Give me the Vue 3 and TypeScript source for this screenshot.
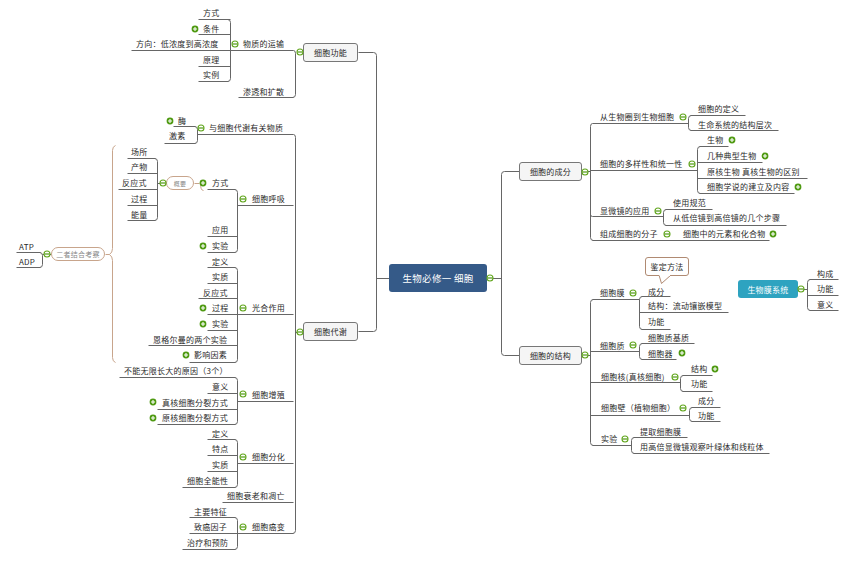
<script setup lang="ts">
interface Topic { t: string; x: number; y: number }
type Seg = [number, number, number]

const topics: Topic[] = [
  { t: '方式', x: 203, y: 13 }, { t: '条件', x: 203, y: 29 }, { t: '方向\uFF1A低浓度到高浓度', x: 136, y: 44 },
  { t: '原理', x: 203, y: 60 }, { t: '实例', x: 203, y: 75 }, { t: '物质的运输', x: 243, y: 44 },
  { t: '渗透和扩散', x: 243, y: 92 }, { t: '酶', x: 178, y: 121 }, { t: '激素', x: 169, y: 136 },
  { t: '与细胞代谢有关物质', x: 209, y: 128 }, { t: '场所', x: 131, y: 152 }, { t: '产物', x: 131, y: 167 },
  { t: '反应式', x: 122, y: 183 }, { t: '过程', x: 131, y: 199 }, { t: '能量', x: 131, y: 215 },
  { t: '方式', x: 212, y: 183 }, { t: '细胞呼吸', x: 252, y: 199 }, { t: '应用', x: 212, y: 230 },
  { t: '实验', x: 212, y: 246 }, { t: '定义', x: 212, y: 262 }, { t: '实质', x: 212, y: 277 },
  { t: '反应式', x: 203, y: 293 }, { t: '过程', x: 212, y: 308 }, { t: '实验', x: 212, y: 324 },
  { t: '恩格尔曼的两个实验', x: 153, y: 340 }, { t: '影响因素', x: 194, y: 355 }, { t: '光合作用', x: 252, y: 308 },
  { t: 'ATP', x: 19, y: 247 }, { t: 'ADP', x: 19, y: 262 },
  { t: '不能无限长大的原因\uFF083个\uFF09', x: 124, y: 371 }, { t: '意义', x: 212, y: 387 },
  { t: '真核细胞分裂方式', x: 162, y: 403 }, { t: '原核细胞分裂方式', x: 162, y: 418 }, { t: '细胞增殖', x: 252, y: 395 },
  { t: '定义', x: 212, y: 434 }, { t: '特点', x: 212, y: 449 }, { t: '实质', x: 212, y: 465 },
  { t: '细胞全能性', x: 187, y: 481 }, { t: '细胞分化', x: 252, y: 457 }, { t: '细胞衰老和凋亡', x: 227, y: 496 },
  { t: '主要特征', x: 194, y: 512 }, { t: '致癌因子', x: 194, y: 527 }, { t: '治疗和预防', x: 187, y: 543 },
  { t: '细胞癌变', x: 252, y: 527 },
  { t: '从生物圈到生物细胞', x: 600, y: 117 }, { t: '细胞的定义', x: 698, y: 109 }, { t: '生命系统的结构层次', x: 698, y: 125 },
  { t: '细胞的多样性和统一性', x: 600, y: 164 }, { t: '生物', x: 707, y: 140 }, { t: '几种典型生物', x: 707, y: 156 },
  { t: '原核生物 真核生物的区别', x: 707, y: 172 }, { t: '细胞学说的建立及内容', x: 707, y: 187 },
  { t: '显微镜的应用', x: 600, y: 211 }, { t: '使用规范', x: 673, y: 203 }, { t: '从低倍镜到高倍镜的几个步骤', x: 673, y: 218 },
  { t: '组成细胞的分子', x: 600, y: 234 }, { t: '细胞中的元素和化合物', x: 683, y: 234 },
  { t: '细胞膜', x: 600, y: 293 }, { t: '成分', x: 648, y: 292 }, { t: '结构\uFF1A流动镶嵌模型', x: 648, y: 306 }, { t: '功能', x: 648, y: 322 },
  { t: '细胞质', x: 600, y: 346 }, { t: '细胞质基质', x: 648, y: 338 }, { t: '细胞器', x: 648, y: 354 },
  { t: '细胞核(真核细胞)', x: 601, y: 377 }, { t: '结构', x: 691, y: 369 }, { t: '功能', x: 691, y: 384 },
  { t: '细胞壁\uFF08植物细胞\uFF09', x: 601, y: 408 }, { t: '成分', x: 698, y: 401 }, { t: '功能', x: 698, y: 416 },
  { t: '实验', x: 601, y: 439 }, { t: '提取细胞膜', x: 640, y: 432 }, { t: '用高倍显微镜观察叶绿体和线粒体', x: 640, y: 447 },
  { t: '构成', x: 817, y: 274 }, { t: '功能', x: 817, y: 289 }, { t: '意义', x: 817, y: 305 },
]

const boxes = [
  { t: '细胞功能', x: 303, y: 43, w: 55, h: 19, k: 'main' },
  { t: '细胞代谢', x: 303, y: 322, w: 55, h: 19, k: 'main' },
  { t: '细胞的成分', x: 519, y: 162, w: 63, h: 19, k: 'main' },
  { t: '细胞的结构', x: 519, y: 346, w: 63, h: 19, k: 'main' },
  { t: '生物必修一 细胞', x: 389, y: 264, w: 98, h: 28, k: 'root' },
  { t: '生物膜系统', x: 738, y: 280, w: 60, h: 18, k: 'float' },
  { t: '二者结合考察', x: 51, y: 247, w: 54, h: 14, k: 'pill' },
  { t: '概要', x: 166, y: 176, w: 28, h: 14, k: 'pill small' },
  { t: '鉴定方法', x: 645, y: 257, w: 44, h: 19, k: 'note' },
]

// [x1, x2, y]
const unders: Seg[] = [
  [198, 230, 19], [198, 230, 34], [131, 293, 50], [198, 230, 66], [198, 228, 81], [238, 293, 97],
  [173, 195, 126], [164, 195, 143], [197, 293, 134], [127, 155, 158], [127, 157, 173], [118, 157, 189],
  [127, 157, 205], [127, 155, 220], [207, 235, 189], [237, 293, 205], [207, 237, 236], [207, 235, 252],
  [207, 235, 267], [207, 237, 283], [198, 237, 298], [207, 293, 314], [207, 237, 330], [148, 237, 345],
  [189, 235, 362], [16, 40, 252], [16, 40, 267], [42, 51, 254], [157, 166, 183],
  [119, 235, 377], [207, 237, 393], [157, 237, 409], [157, 235, 424], [237, 293, 401],
  [207, 235, 439], [207, 237, 455], [207, 237, 471], [182, 235, 487], [237, 293, 463], [222, 293, 502],
  [189, 235, 517], [189, 293, 533], [182, 235, 549],
  [592, 688, 123], [690, 745, 115], [690, 778, 130], [590, 697, 170], [699, 728, 146], [697, 762, 162],
  [697, 807, 178], [699, 794, 193], [592, 663, 216], [665, 712, 209], [665, 786, 225], [592, 769, 240],
  [592, 639, 299], [641, 670, 296], [639, 728, 312], [641, 670, 329], [590, 639, 351], [641, 694, 343], [641, 676, 359],
  [590, 680, 382], [682, 712, 375], [682, 712, 391], [590, 689, 415], [691, 720, 407], [691, 720, 421],
  [592, 631, 445], [633, 687, 437], [633, 769, 453], [809, 838, 279], [807, 838, 295], [809, 838, 310],
  [798, 807, 289],
]

// rounded curly ends: [x, y1, y2], opening to the left
const leftBrackets: Seg[] = [
  [230, 19, 81], [197, 126, 143], [157, 158, 220], [237, 189, 252], [237, 267, 362], [42, 252, 267],
  [237, 377, 424], [237, 439, 487], [237, 517, 549],
]
// opening to the right
const rightBrackets: Seg[] = [
  [688, 115, 130], [697, 146, 193], [663, 209, 225], [639, 296, 329], [639, 343, 359], [680, 375, 391],
  [689, 407, 421], [631, 437, 453], [807, 279, 310],
]

const plain = [
  'M293 50Q295 50 295 53L295 94Q295 97 292 97',
  'M293 134Q295 134 295 137L295 530Q295 533 292 533',
  'M295 332L303 332',
  'M358 52L373 52Q376 52 376 55L376 328Q376 331 373 331L358 331',
  'M376 278L389 278',
  'M487 278L501 278',
  'M519 171L504 171Q501 171 501 174L501 352Q501 355 504 355L519 355',
  'M582 171L590 171',
  'M592 123Q590 123 590 126L590 237Q590 240 593 240',
  'M592 216Q590 216 590 214',
  'M582 355L590 355',
  'M593 299Q590 299 590 302L590 442Q590 445 593 445',
]

const tan = [
  'M105 254L109 254Q112 252 112 248L112 150Q112 146 115 145',
  'M109 254Q112 256 112 260L112 357Q112 361 115 362',
  'M194 183L199 183M203 180Q200 180 200 183Q200 190 203 190',
]

const pluses: [number, number][] = [
  [195, 29], [170, 121], [203, 183], [203, 246], [203, 308], [203, 324], [186, 355], [153, 402], [153, 418],
  [732, 140], [765, 156], [798, 187], [773, 234], [682, 353], [715, 369],
]
const minuses: [number, number][] = [
  [235, 44], [300, 52], [201, 128], [163, 183], [243, 199], [243, 308], [47, 254], [300, 332], [243, 394],
  [243, 457], [243, 527], [490, 278], [585, 172], [585, 355], [683, 117], [692, 164], [658, 211], [667, 234],
  [633, 293], [633, 345], [675, 377], [683, 408], [625, 439], [801, 289],
]

function leftBracket(b: Seg): string {
  const [x, a, c] = b
  return `M${x - 3} ${a}Q${x} ${a} ${x} ${a + 3}L${x} ${c - 3}Q${x} ${c} ${x - 3} ${c}`
}
function rightBracket(b: Seg): string {
  const [x, a, c] = b
  return `M${x + 3} ${a}Q${x} ${a} ${x} ${a + 3}L${x} ${c - 3}Q${x} ${c} ${x + 3} ${c}`
}
</script>

<template>
  <main class="map">
    <svg class="links" width="850" height="561" viewBox="0 0 850 561" fill="none">
      <g transform="translate(.5 .5)" stroke="#666" stroke-width="1">
        <path v-for="(u, i) in unders" :key="'u' + i" :d="`M${u[0]} ${u[2]}L${u[1]} ${u[2]}`" />
        <path v-for="(b, i) in leftBrackets" :key="'l' + i" :d="leftBracket(b)" />
        <path v-for="(b, i) in rightBrackets" :key="'r' + i" :d="rightBracket(b)" />
        <path v-for="(d, i) in plain" :key="'p' + i" :d="d" />
      </g>
      <g transform="translate(.5 .5)" stroke="#c8a58c" stroke-width="1">
        <path v-for="(d, i) in tan" :key="'t' + i" :d="d" />
      </g>
    </svg>

    <span v-for="(n, i) in topics" :key="'n' + i" class="topic" :style="{ left: n.x + 'px', top: n.y - 6 + 'px' }">{{ n.t }}</span>

    <div
      v-for="(b, i) in boxes"
      :key="'b' + i"
      class="box"
      :class="b.k"
      :style="{ left: b.x + 'px', top: b.y + 'px', width: b.w + 'px', height: b.h + 'px' }"
    >{{ b.t }}</div>

    <svg class="tail" width="16" height="10" viewBox="0 0 16 10" fill="#fff">
      <path d="M1 0L3.5 8.5L13 0" stroke="#b08a72" />
      <path d="M1.5 0L12 0" stroke="#fff" stroke-width="2" />
    </svg>

    <svg class="links" width="850" height="561" viewBox="0 0 850 561">
      <g v-for="(p, i) in pluses" :key="'a' + i" :transform="`translate(${p[0]} ${p[1]})`">
        <circle r="3.4" fill="#4f9a12" />
        <path d="M-2 0H2M0-2V2" stroke="#fff" stroke-width="1.1" />
      </g>
      <g v-for="(p, i) in minuses" :key="'m' + i" :transform="`translate(${p[0]} ${p[1]})`">
        <circle r="3" fill="#fff" stroke="#62a61e" stroke-width="1.1" />
        <path d="M-2.6 0H2.6" stroke="#4f9a12" stroke-width="1.2" />
      </g>
    </svg>
  </main>
</template>

<style scoped>
.map {
  position: relative;
  width: 850px;
  height: 561px;
  overflow: hidden;
  background: #fff;
  font-family: "Noto Sans CJK SC", "Liberation Sans", sans-serif;
}
.links,
.tail {
  position: absolute;
  left: 0;
  top: 0;
}
.tail {
  left: 658px;
  top: 275px;
}
.topic {
  position: absolute;
  font-size: 8px;
  line-height: 12px;
  letter-spacing: 0.25px;
  white-space: pre;
  color: #2a2a2a;
}
.box {
  position: absolute;
  box-sizing: border-box;
  display: flex;
  align-items: center;
  justify-content: center;
  white-space: pre;
  font-size: 8px;
  letter-spacing: 0.25px;
  color: #2a2a2a;
}
.main {
  background: #f5f5f5;
  border: 1px solid #777;
  border-radius: 3px;
}
.root {
  background: #355a88;
  border-radius: 3px;
  color: #fff;
  font-size: 9.5px;
  letter-spacing: 0.3px;
}
.float {
  background: #2ea3c0;
  border-radius: 3px;
  color: #fff;
}
.pill {
  background: #fff;
  border: 1px solid #c8a58c;
  border-radius: 8px;
  color: #888;
  font-size: 7px;
}
.small {
  font-size: 6px;
}
.note {
  background: #fff;
  border: 1px solid #b08a72;
  border-radius: 3px;
}
</style>
